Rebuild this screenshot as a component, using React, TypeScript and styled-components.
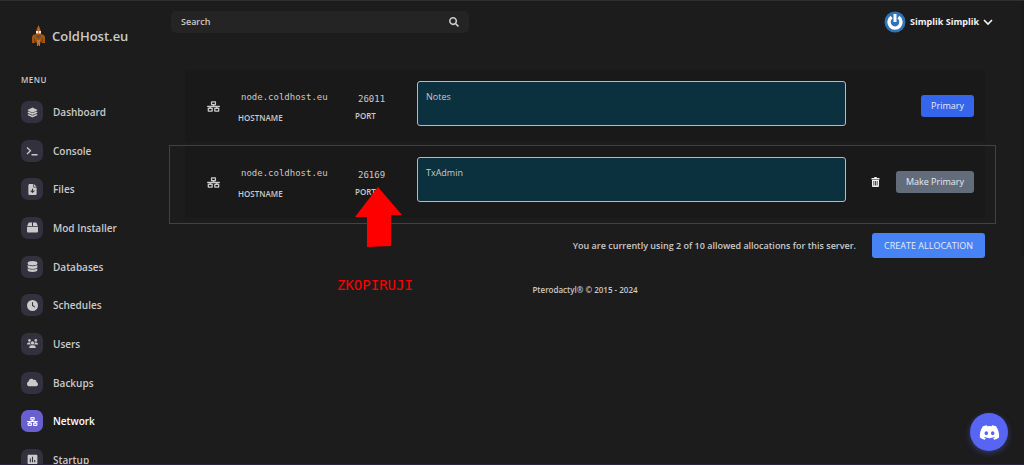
import React from "react";
import styled, { createGlobalStyle, css } from "styled-components";
import {
  FaLayerGroup,
  FaDatabase,
  FaCloud,
  FaNetworkWired,
  FaDiscord,
  FaUsers,
  FaClock,
  FaFileArrowDown,
} from "react-icons/fa6";
import { FaSearch } from "react-icons/fa";
import { MdAssessment } from "react-icons/md";
import type { IconType } from "react-icons";

const sans = `"Open Sans", "Noto Sans", sans-serif`;
const mono = `"DejaVu Sans Mono", monospace`;

const GlobalStyle = createGlobalStyle`
  *, *::before, *::after { box-sizing: border-box; }
  body {
    margin: 0;
    background: #1c1c1c;
    color: #cacaca;
    font-family: ${sans};
    font-size: 9px;
    line-height: 14px;
  }
  button, input, textarea { font: inherit; color: inherit; }
  button { cursor: pointer; }
`;

const Page = styled.div`
  position: relative;
  display: flex;
  height: 100vh;
  overflow: hidden;
  border-top: 1px solid #2f2f31;
`;

const BottomEdge = styled.div`
  position: absolute;
  inset: auto 0 0 0;
  height: 1px;
  background: #2b2540;
`;

const ScrollTrack = styled.div`
  position: absolute;
  top: 0;
  right: 0;
  width: 3px;
  height: 55%;
  background: #181818;
`;

const Sidebar = styled.aside`
  flex: 0 0 171px;
  padding: 23px 0 0 21px;
`;

const Brand = styled.a`
  display: flex;
  align-items: center;
  gap: 6px;
  height: 24px;
  padding-left: 10px;
  color: #cacaca;
  font-size: 13px;
  font-weight: 600;
  text-decoration: none;
`;

const MenuTitle = styled.h2`
  margin: 25px 0 14px;
  font-size: 8px;
  line-height: 14px;
  font-weight: 600;
  letter-spacing: 0.5px;
`;

const Menu = styled.nav`
  display: flex;
  flex-direction: column;
  justify-content: space-between;
  height: 370px;
`;

const MenuLink = styled.a<{ $active?: boolean }>`
  display: flex;
  align-items: center;
  gap: 10px;
  color: ${(p) => (p.$active ? "#ffffff" : "#cacaca")};
  font-size: 10px;
  font-weight: 600;
  text-decoration: none;
`;

const IconTile = styled.span<{ $active?: boolean }>`
  display: grid;
  place-items: center;
  width: 22px;
  height: 22px;
  border-radius: 7px;
  background: ${(p) => (p.$active ? "#6a5fcf" : "#34313f")};
  font-size: 11px;
`;

const Main = styled.main`
  flex: 1;
  min-width: 0;
  padding-right: 28px;
`;

const TopBar = styled.header`
  display: flex;
  justify-content: space-between;
  align-items: center;
  height: 42px;
`;

const SearchBox = styled.label`
  display: flex;
  align-items: center;
  flex: 0 1 298px;
  height: 22px;
  padding: 0 10px;
  border-radius: 5px;
  background: #242424;
`;

const SearchInput = styled.input`
  flex: 1;
  min-width: 0;
  padding: 0;
  border: 0;
  outline: 0;
  background: none;
  font-weight: 600;
  &::placeholder { color: #cacaca; opacity: 1; }
`;

const UserButton = styled.button`
  display: flex;
  align-items: center;
  gap: 4px;
  padding: 0 3px 0 0;
  border: 0;
  background: none;
  color: #f4f4f4;
  font-weight: 700;
`;

const Content = styled.section`
  padding: 27px 11px 0 14px;
`;

const Allocation = styled.article`
  position: relative;
  display: flex;
  align-items: center;
  height: 72px;
  padding: 0 11px 0 22px;
  margin-bottom: 4px;
  border-radius: 4px;
  background: #191919;
`;

const Field = styled.div<{ $kind: "host" | "port" }>`
  display: flex;
  flex-direction: column;
  padding-top: 2px;
  ${(p) =>
    p.$kind === "host"
      ? css`
          flex: 0 0 117px;
          gap: 7px;
          margin-left: 18px;
        `
      : css`
          flex: 0 0 62px;
          gap: 3px;
        `}
`;

const Code = styled.code`
  padding-left: 3px;
  font-family: ${mono};
  font-size: 9px;
  line-height: 14px;
`;

const Caption = styled.span`
  font-size: 8px;
  line-height: 14px;
  font-weight: 600;
`;

const Notes = styled.textarea`
  flex: 1;
  min-width: 0;
  height: 45px;
  margin-bottom: 6px;
  padding: 8px;
  border: 1px solid #b4bcc0;
  border-radius: 3px;
  outline: 0;
  resize: none;
  background: #0b303e;
`;

const Actions = styled.div`
  display: flex;
  justify-content: flex-end;
  align-items: center;
  gap: 16px;
  flex: 0 0 128px;
`;

const Button = styled.button<{ $tone: "primary" | "muted" | "create" }>`
  height: ${(p) => (p.$tone === "create" ? 25 : 22)}px;
  padding: 0 ${(p) => (p.$tone === "create" ? 12 : 10)}px;
  border: 0;
  border-radius: 3px;
  background: ${(p) =>
    ({ primary: "#3465eb", muted: "#636c7a", create: "#4883f6" })[p.$tone]};
  color: #e6ebf5;
  white-space: nowrap;
`;

const IconButton = styled.button`
  display: flex;
  padding: 0;
  border: 0;
  background: none;
  color: #f0f0f0;
`;

const Summary = styled.div`
  display: flex;
  justify-content: flex-end;
  align-items: center;
  gap: 16px;
  margin-top: 15px;
  font-weight: 600;
  ${Button} { font-weight: 400; }
`;

const Footer = styled.footer`
  margin-top: 25px;
  text-align: center;
  font-size: 8px;
  font-weight: 600;
`;

const Highlight = styled.div`
  position: absolute;
  inset: -1px -11px -6px -16px;
  border: 1px solid #dc0000;
  pointer-events: none;
`;

const Pointer = styled.div`
  position: absolute;
  top: 41px;
  left: 152px;
  color: #ff0000;
  pointer-events: none;
  svg { display: block; margin-left: 18px; }
`;

const PointerLabel = styled.span`
  display: block;
  margin-top: 29px;
  font-family: ${mono};
  font-size: 14px;
  line-height: 18px;
`;

const ChatButton = styled.button`
  position: absolute;
  right: 16px;
  bottom: 14px;
  display: grid;
  place-items: center;
  width: 38px;
  height: 38px;
  padding: 0;
  border: 0;
  border-radius: 50%;
  background: #5865f2;
  box-shadow: 0 2px 6px rgba(88, 101, 242, 0.4);
  color: #ffffff;
`;

const items: { label: string; icon: IconType | (() => React.JSX.Element) }[] = [
  { label: "Dashboard", icon: FaLayerGroup },
  { label: "Console", icon: PromptIcon },
  { label: "Files", icon: FaFileArrowDown },
  { label: "Mod Installer", icon: PackageIcon },
  { label: "Databases", icon: FaDatabase },
  { label: "Schedules", icon: FaClock },
  { label: "Users", icon: FaUsers },
  { label: "Backups", icon: FaCloud },
  { label: "Network", icon: FaNetworkWired },
  { label: "Startup", icon: () => <MdAssessment size={13} /> },
];

function PromptIcon() {
  return (
    <svg width="12" height="10" viewBox="0 0 24 20" fill="none" stroke="currentColor" strokeWidth="2.6">
      <path d="M2 3l7 6.500L2 16M11 17.500h12" />
    </svg>
  );
}

function PackageIcon() {
  return (
    <svg width="11" height="11" viewBox="0 0 22 22" fill="currentColor">
      <path d="M4.5 1H10v7H0.5L2.6 2.4Q3.1 1 4.5 1zM12 1h5.5q1.4 0 1.9 1.4L21.5 8H12zM0 9.5h22V19q0 2-2 2H2q-2 0-2-2z" />
    </svg>
  );
}

function Logo() {
  return (
    <svg width="15" height="22" viewBox="0 0 15 22">
      <path d="M7.500 0L9.500 5V8H5.500V5z" fill="#b8642c" />
      <path d="M5 9h5l3 1 1 2v6h-3l-1-2-1 3H6l-1-3-1 2H1v-6l1-2z" fill="#a5560f" />
      <path d="M5 6h5v3H5z" fill="#c98a62" />
      <path d="M5 6h2v2H5zM8 6h2v2H8z" fill="#f3ece6" />
      <path d="M5 10h5v2l-2.500 2L5 12z" fill="#6f4a35" />
      <path d="M3.500 13v4M11.500 13v4" stroke="#7a3f0c" fill="none" />
      <path d="M6 15h3v6H8l-.5-2-.5 2H6z" fill="#b8733f" />
    </svg>
  );
}

function Avatar() {
  return (
    <svg width="22" height="22" viewBox="0 0 22 22">
      <circle cx="11" cy="11" r="10.500" fill="#2f74b5" />
      <path d="M7.600 6.200A6 6 0 1 0 14.400 6.200" fill="none" stroke="#fff" strokeWidth="3.400" />
      <path d="M11 3v8" stroke="#fff" strokeWidth="3" />
    </svg>
  );
}

function TrashIcon() {
  return (
    <svg width="9" height="10" viewBox="0 0 16 20" fill="currentColor">
      <path d="M0 2h5l1-2h4l1 2h5v3H0z" />
      <path fillRule="evenodd" d="M1 6h14v12q0 2-2 2H3q-2 0-2-2zM4 8v9h1.500V8zm3.200 0v9h1.500V8zm3.300 0v9H12V8z" />
    </svg>
  );
}

function AllocationRow(props: {
  port: string;
  note: string;
  actions: React.ReactNode;
  children?: React.ReactNode;
}) {
  return (
    <Allocation>
      <FaNetworkWired size={13} />
      <Field $kind="host">
        <Code>node.coldhost.eu</Code>
        <Caption>HOSTNAME</Caption>
      </Field>
      <Field $kind="port">
        <Code>{props.port}</Code>
        <Caption>PORT</Caption>
      </Field>
      <Notes aria-label={`Notes for port ${props.port}`} placeholder="Notes" defaultValue={props.note} />
      <Actions>{props.actions}</Actions>
      {props.children}
    </Allocation>
  );
}

export default function App() {
  return (
    <Page>
      <GlobalStyle />
      <Sidebar>
        <Brand href="#">
          <Logo />
          ColdHost.eu
        </Brand>
        <MenuTitle>MENU</MenuTitle>
        <Menu>
          {items.map(({ label, icon: Icon }) => (
            <MenuLink key={label} href="#" $active={label === "Network"}>
              <IconTile $active={label === "Network"}>
                <Icon />
              </IconTile>
              {label}
            </MenuLink>
          ))}
        </Menu>
      </Sidebar>
      <Main>
        <TopBar>
          <SearchBox>
            <SearchInput aria-label="Search" placeholder="Search" />
            <FaSearch size={10} />
          </SearchBox>
          <UserButton>
            <Avatar />
            Simplik Simplik
            <svg width="10" height="10" viewBox="0 0 10 10" fill="none" stroke="currentColor" strokeWidth="1.600">
              <path d="M1 3l4 4 4-4" />
            </svg>
          </UserButton>
        </TopBar>
        <Content>
          <AllocationRow port="26011" note="Notes" actions={<Button $tone="primary">Primary</Button>} />
          <AllocationRow
            port="26169"
            note="TxAdmin"
            actions={
              <>
                <IconButton aria-label="Delete allocation">
                  <TrashIcon />
                </IconButton>
                <Button $tone="muted">Make Primary</Button>
              </>
            }
          >
            <Highlight />
            <Pointer>
              <svg width="47" height="60" viewBox="0 0 47 60" fill="currentColor">
                <path d="M23 0L47 28H36V59L12 60V30H0z" />
              </svg>
              <PointerLabel>ZKOPIRUJI</PointerLabel>
            </Pointer>
          </AllocationRow>
          <Summary>
            <span>You are currently using 2 of 10 allowed allocations for this server.</span>
            <Button $tone="create">CREATE ALLOCATION</Button>
          </Summary>
          <Footer>Pterodactyl® © 2015 - 2024</Footer>
        </Content>
      </Main>
      <ScrollTrack />
      <BottomEdge />
      <ChatButton aria-label="Open Discord">
        <FaDiscord size={21} />
      </ChatButton>
    </Page>
  );
}
